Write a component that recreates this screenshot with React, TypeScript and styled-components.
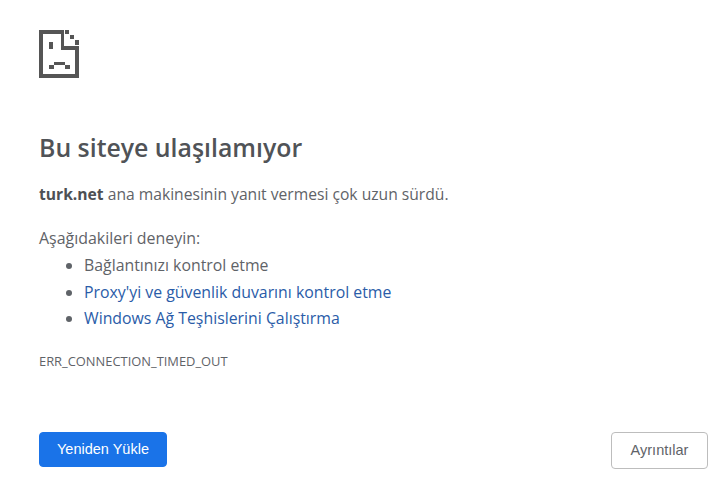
import React from 'react'
import styled, { createGlobalStyle } from 'styled-components'

const GlobalStyle = createGlobalStyle`
  html, body {
    margin: 0;
    padding: 0;
    background: #fff;
  }
`

const Page = styled.div`
  width: 720px;
  height: 488px;
  box-sizing: border-box;
  padding: 30px 12px 0 39px;
  display: flex;
  flex-direction: column;
  overflow: hidden;
  font-family: "Open Sans", "Noto Sans", sans-serif;
  color: #5f6368;
`

const SadIcon = styled.svg`
  display: block;
  width: 41px;
  height: 48px;
  color: #555;
`

const Title = styled.h1`
  margin: 54px 0 0;
  font-size: 24.85px;
  line-height: 30px;
  font-weight: 600;
  color: #505357;
`

const Message = styled.p`
  margin: 20px 0 0;
  font-size: 15.65px;
  line-height: 24px;
`

const Host = styled.strong`
  font-weight: 700;
  color: #4d5054;
`

const Hint = styled.p`
  margin: 20px 0 0;
  font-size: 15.95px;
  line-height: 24px;
`

const Suggestions = styled.ul`
  margin: 2px 0 0;
  padding: 0 0 0 45px;
  font-size: 15.85px;
  line-height: 26.5px;
`

const Suggestion = styled.li<{ $link?: boolean }>`
  color: ${p => (p.$link ? '#2a5ca8' : '#5f6368')};

  &::marker {
    color: #5f6368;
  }
`

const ErrorCode = styled.div`
  margin-top: 21px;
  font-size: 12.9px;
  line-height: 16px;
`

const Actions = styled.div`
  margin-top: 63px;
  display: flex;
  justify-content: space-between;
  align-items: flex-start;
`

const Button = styled.button<{ $primary?: boolean }>`
  box-sizing: border-box;
  height: ${p => (p.$primary ? '35px' : '37px')};
  width: ${p => (p.$primary ? '128px' : '97px')};
  padding: 0;
  border-radius: 4px;
  border: 1px solid ${p => (p.$primary ? '#1a73e8' : '#bdbdbd')};
  background: ${p => (p.$primary ? '#1a73e8' : '#fff')};
  color: ${p => (p.$primary ? '#fff' : '#5f6368')};
  font-family: "Liberation Sans", Arial, sans-serif;
  font-size: 14.5px;
`

export default function App() {
  return (
    <>
      <GlobalStyle />
      <Page>
        <SadIcon viewBox="0 0 41 48" shapeRendering="crispEdges" fill="currentColor">
          <path d="M0 0h25v4H4v40h32V20H22V4h3v12h15v32H0z" />
          <path d="M26 0h4v4h-4zM31 5h4v4h-4zM36 10h4v5h-4z" />
          <path d="M10 12h4v7h-4z" />
          <path d="M15 32h11v3H15zM10 35h5v4h-5zM26 35h5v4h-5z" />
        </SadIcon>
        <Title>Bu siteye ulaşılamıyor</Title>
        <Message><Host>turk.net</Host> ana makinesinin yanıt vermesi çok uzun sürdü.</Message>
        <Hint>Aşağıdakileri deneyin:</Hint>
        <Suggestions>
          <Suggestion>Bağlantınızı kontrol etme</Suggestion>
          <Suggestion $link>Proxy'yi ve güvenlik duvarını kontrol etme</Suggestion>
          <Suggestion $link>Windows Ağ Teşhislerini Çalıştırma</Suggestion>
        </Suggestions>
        <ErrorCode>ERR_CONNECTION_TIMED_OUT</ErrorCode>
        <Actions>
          <Button $primary>Yeniden Yükle</Button>
          <Button>Ayrıntılar</Button>
        </Actions>
      </Page>
    </>
  )
}
